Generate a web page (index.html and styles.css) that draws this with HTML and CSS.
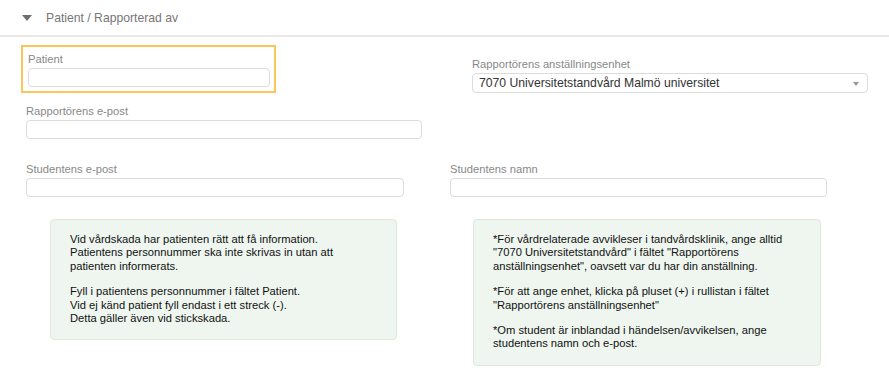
FILE: index.html
```html
<!DOCTYPE html>
<html lang="sv">
<head>
    <title>Patient / Rapporterad av</title>
    <link rel="stylesheet" href="styles.css">
</head>
<body>
    <div class="section-header">
        <span class="caret"></span>
        <span class="section-title">Patient / Rapporterad av</span>
    </div>

    <div class="section-body">
        <!-- Patient + anställningsenhet -->
        <div class="row row-top">
            <div class="field field-patient">
                <label class="field-label" for="patient">Patient</label>
                <input class="field-input" type="text" id="patient">
            </div>
            <div class="field field-unit">
                <label class="field-label" for="unit">Rapportörens anställningsenhet</label>
                <div class="select-box" id="unit">
                    <span>7070 Universitetstandvård Malmö universitet</span>
                    <span class="select-arrow"></span>
                </div>
            </div>
        </div>

        <div class="row">
            <div class="field field-email">
                <label class="field-label" for="reporterEmail">Rapportörens e-post</label>
                <input class="field-input" type="text" id="reporterEmail">
            </div>
        </div>

        <div class="row row-students">
            <div class="field field-student-email">
                <label class="field-label" for="studentEmail">Studentens e-post</label>
                <input class="field-input" type="text" id="studentEmail">
            </div>
            <div class="field field-student-name">
                <label class="field-label" for="studentName">Studentens namn</label>
                <input class="field-input" type="text" id="studentName">
            </div>
        </div>

        <!-- Info boxes -->
        <div class="row row-info">
            <div class="info-box info-left">
                <p>Vid vårdskada har patienten rätt att få information.<br>
                Patientens personnummer ska inte skrivas in utan att<br>
                patienten informerats.</p>
                <p>Fyll i patientens personnummer i fältet Patient.<br>
                Vid ej känd patient fyll endast i ett streck (-).<br>
                Detta gäller även vid stickskada.</p>
            </div>
            <div class="info-box info-right">
                <p>*För vårdrelaterade avvikleser i tandvårdsklinik, ange alltid<br>
                "7070 Universitetstandvård" i fältet "Rapportörens<br>
                anställningsenhet", oavsett var du har din anställning.</p>
                <p>*För att ange enhet, klicka på pluset (+) i rullistan i fältet<br>
                "Rapportörens anställningsenhet"</p>
                <p>*Om student är inblandad i händelsen/avvikelsen, ange<br>
                studentens namn och e-post.</p>
            </div>
        </div>
    </div>
</body>
</html>
```

FILE: styles.css
```css
body {
    font-family: "Liberation Sans", Arial, sans-serif;
    background-color: #fff;
    margin: 0;
    padding: 0;
}

.section-header {
    display: flex;
    align-items: center;
    height: 35px;
    border-bottom: 2px solid #e8e8e8;
}

.caret {
    width: 0;
    height: 0;
    margin-left: 22px;
    margin-right: 14px;
    border-left: 5px solid transparent;
    border-right: 5px solid transparent;
    border-top: 6px solid #6f6f6f;
}

.section-title {
    font-size: 12.2px;
    color: #777;
}

.section-body {
    padding-top: 8px;
}

.row {
    display: flex;
    align-items: flex-start;
}

.field-label {
    display: block;
    font-size: 11.2px;
    color: #888;
    line-height: 14px;
    margin-bottom: 2px;
}

.field-input {
    display: block;
    box-sizing: border-box;
    height: 19px;
    border: 1px solid #dcdcdc;
    border-radius: 4px;
    background: #fff;
    padding: 0 6px;
    margin: 0;
}

.field-patient {
    box-sizing: border-box;
    width: 255px;
    height: 48px;
    margin-left: 21px;
    padding: 5px 6px 0 5px;
    border: 2px solid #fcc55a;
}

.field-patient .field-input {
    width: 242px;
}

.field-unit {
    margin-left: 196px;
    margin-top: 12px;
}

.select-box {
    box-sizing: border-box;
    display: flex;
    align-items: center;
    justify-content: space-between;
    width: 396px;
    height: 20px;
    padding: 0 8px 0 6px;
    border: 1px solid #dcdcdc;
    border-radius: 4px;
    font-size: 12.2px;
    color: #333;
}

.select-arrow {
    width: 0;
    height: 0;
    border-left: 3px solid transparent;
    border-right: 3px solid transparent;
    border-top: 4px solid #999;
    margin-top: 2px;
}

.field-email {
    margin-left: 26px;
    margin-top: 11px;
}

.field-email .field-input {
    width: 396px;
}

.row-students {
    margin-top: 23px;
}

.field-student-email {
    margin-left: 26px;
}

.field-student-email .field-input {
    width: 378px;
}

.field-student-name {
    margin-left: 46px;
}

.field-student-name .field-input {
    width: 377px;
}

.row-info {
    margin-top: 22px;
}

.info-box {
    box-sizing: border-box;
    background-color: #eef6ef;
    border: 1px solid #dde8de;
    border-radius: 4px;
    font-size: 11.2px;
    line-height: 13.4px;
    color: #111;
    padding: 13px 10px 10px 19px;
}

.info-box p {
    margin: 0 0 12px 0;
}

.info-box p:last-child {
    margin-bottom: 0;
}

.info-left {
    width: 347px;
    height: 121px;
    margin-left: 50px;
}

.info-right {
    width: 348px;
    height: 147px;
    margin-left: 76px;
}
```
